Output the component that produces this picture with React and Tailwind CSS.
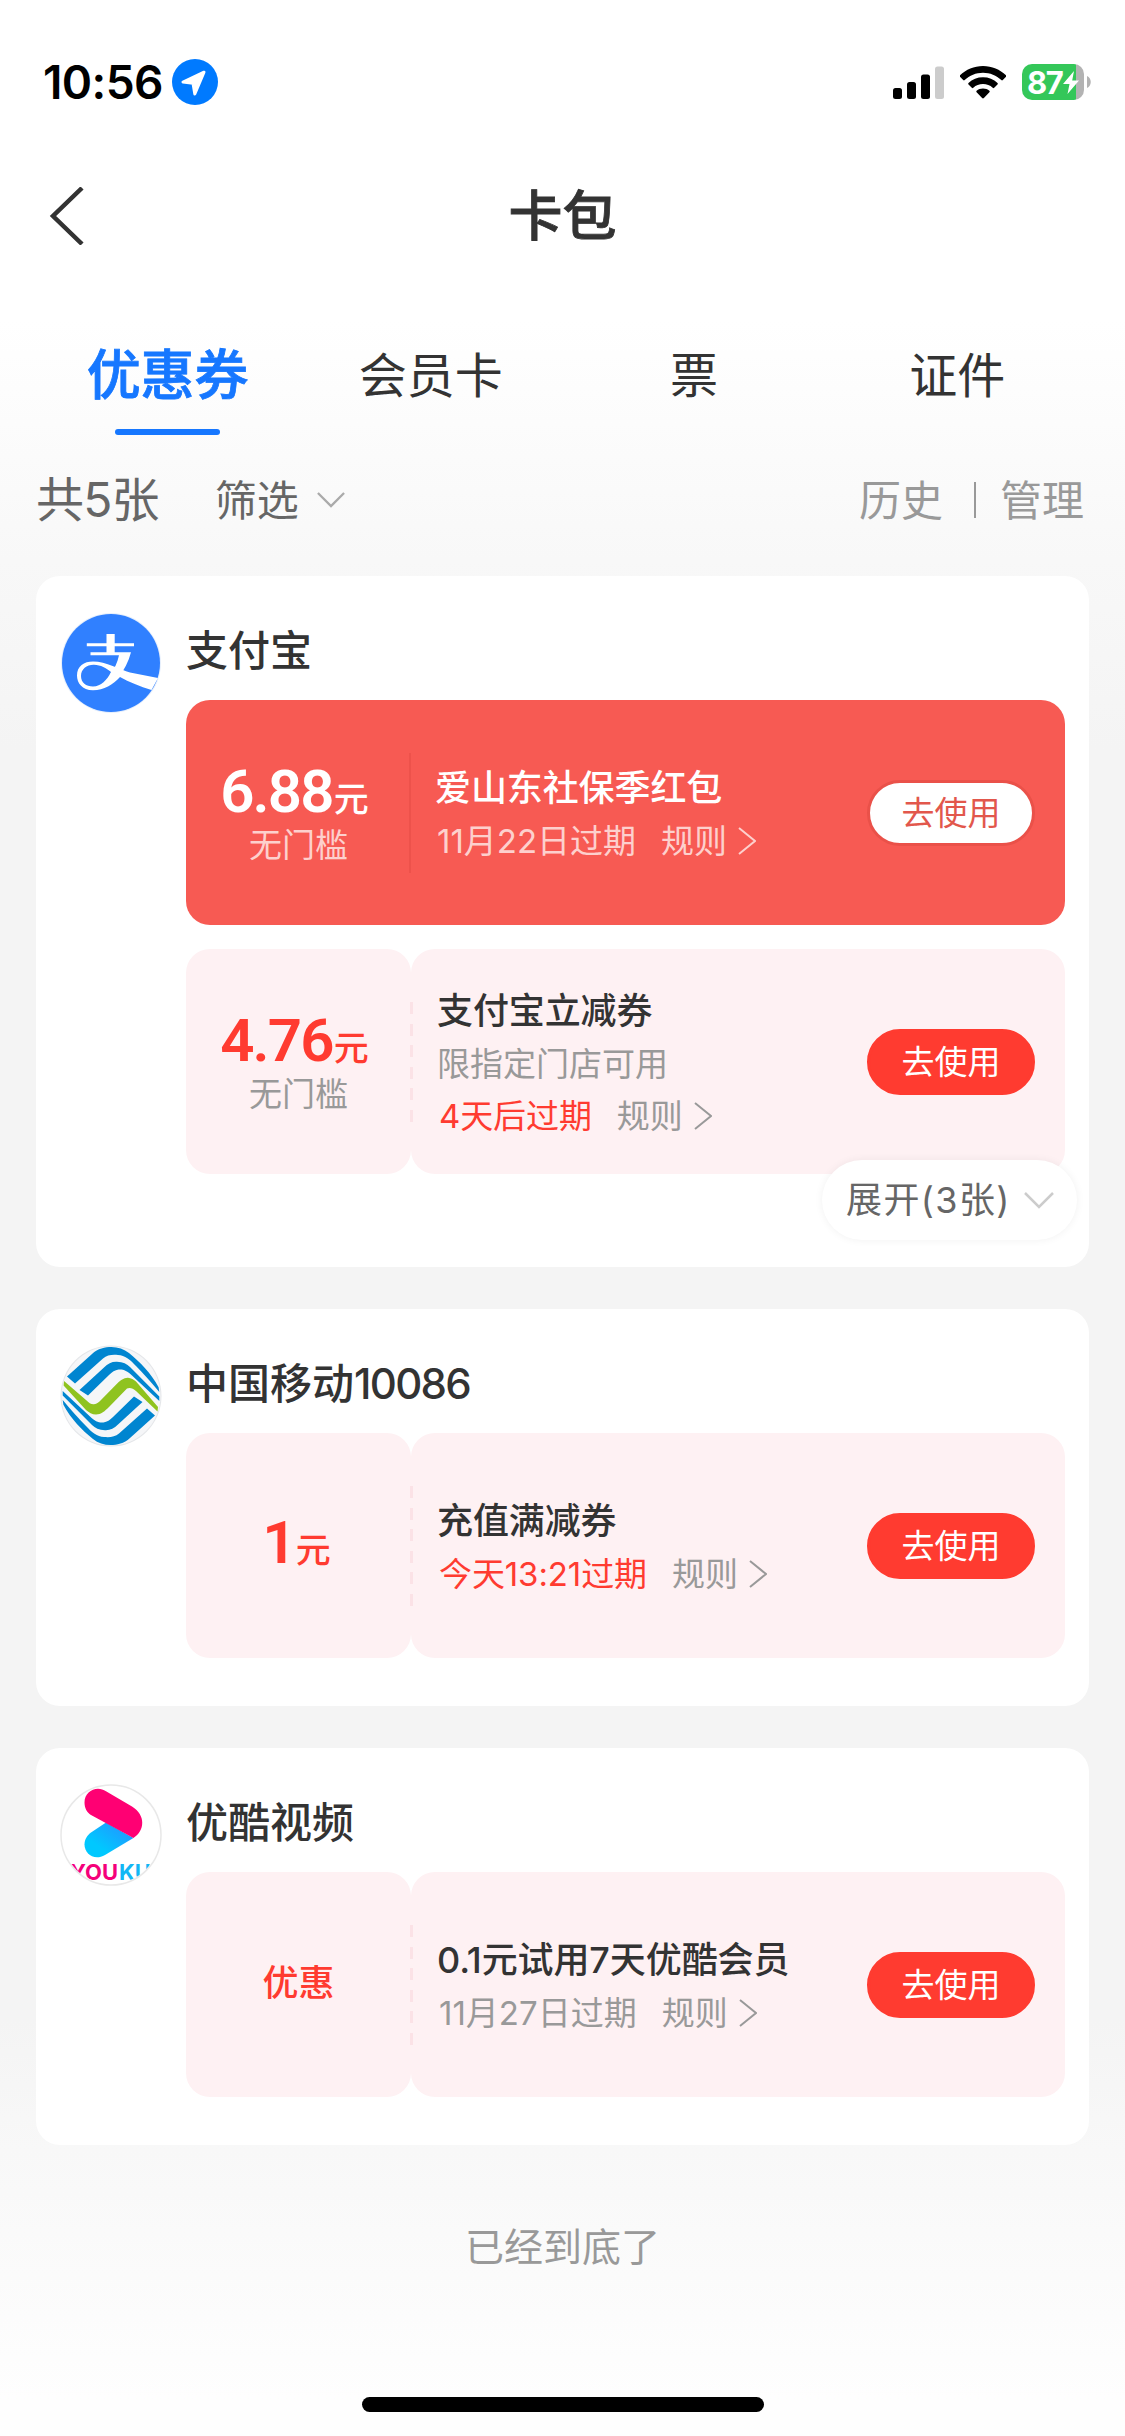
// src/App.jsx
const groups = [
  {
    name: "支付宝",
    Logo: AlipayLogo,
    more: "展开(3张)",
    coupons: [
      { amount: "6.88", note: "无门槛", title: "爱山东社保季红包", expire: "11月22日过期", featured: true },
      { amount: "4.76", note: "无门槛", title: "支付宝立减券", limit: "限指定门店可用", expire: "4天后过期", urgent: true },
    ],
  },
  {
    name: "中国移动",
    hotline: "10086",
    Logo: MobileLogo,
    coupons: [{ amount: "1", title: "充值满减券", expire: "今天13:21过期", urgent: true }],
  },
  {
    name: "优酷视频",
    Logo: YoukuLogo,
    coupons: [{ label: "优惠", title: "0.1元试用7天优酷会员", expire: "11月27日过期" }],
  },
];

const tabs = ["优惠券", "会员卡", "票", "证件"];

function AlipayLogo() {
  return (
    <svg viewBox="0 0 102 102" className="size-[102px]">
      <circle cx="51" cy="51" r="50" fill="#e6effc" />
      <circle cx="51" cy="51" r="49" fill="#3080ff" />
      <g fill="#fff">
        <path d="M46.500 22h8.200v9.200H74v3H54.700v6H71c-2.500 9.500-7 18-12.500 25.300L50 62.500c4.500-5.500 7.500-12 9-19.200H30.500v-3h16v-6H26.800v-3H46.500z" />
        <path
          fillRule="evenodd"
          d="M33 49.500C46 49.500 60 57.500 70 60.500L98 66 91.500 78C80 74.500 69 70 60 65 53 72.500 44 78.300 33 78.300 22 78 17 71 17 63.500 17 54 24 49.500 33 49.500ZM21 64C21 70.500 26 74.500 33 74.500 41 74.500 47 68 51 60 46 56 41 53 34 52.800 27 52.600 21 57 21 64Z"
        />
      </g>
    </svg>
  );
}

function MobileLogo() {
  const blue = (
    <>
      <path d="M7 31.500 32 9C38 3.500 45 2 51.400 2 58 2 64 4 69 8 80 17 91 28 98.600 42.300L99.300 47C90 36 83 28 76 21 70 14.500 65 10.500 58 10 52 9.500 47 10 43 13.500L15 38.500Z" />
      <path d="M19.500 45 44 22.500C48 18.500 52 16.500 57 16.800 63 17 67 19 70 22L99.300 51.500V56L72 30.500C67 25.500 63 24 58.500 24.500 55 25 52 27 49 30L28 50.500Z" />
    </>
  );
  return (
    <svg viewBox="0 0 102 102" className="size-[102px]">
      <circle cx="51" cy="51" r="50.500" fill="#e4e6e9" />
      <circle cx="51" cy="51" r="49.500" fill="#f5f6f8" />
      <g fill="#0085d0">
        {blue}
        <g transform="rotate(180 51 51)">{blue}</g>
      </g>
      <path
        fill="#8fc31f"
        d="M4 36 26 55C29 58 31 59.500 34 59.300 37 59 39 57 41 55L55.700 40C60 35.500 64 32.500 68 32.700 71 33 74 34.500 76 36.500L98 62 97.500 66.500 76 46C73 43.500 70 42 67 43.500L49 62C45 66 41 69.500 36 69.500 32 69.500 29 67.500 26 65L3.600 40.500Z"
      />
    </svg>
  );
}

function YoukuLogo() {
  return (
    <svg viewBox="0 0 102 102" className="size-[102px]">
      <defs>
        <clipPath id="youku-clip">
          <circle cx="51" cy="51" r="49" />
        </clipPath>
        <linearGradient id="youku-blue" x1="0" y1="1" x2="1" y2="0">
          <stop offset="0.3" stopColor="#00c8ff" />
          <stop offset="1" stopColor="#2a8cff" />
        </linearGradient>
      </defs>
      <circle cx="51" cy="51" r="50" fill="#fff" stroke="#e8e8e8" strokeWidth="1.5" />
      <path fill="url(#youku-blue)" d="M46 38.500 73.400 54 45 71C34 77.500 24.500 69.500 24.500 60.500 24.500 55 27.500 51 31 48.500Z" />
      <path fill="#ff0073" d="M31 31C27 28.500 24.500 24 24.500 18.500 24.500 10 31 4.700 38 4.700 41 4.700 43.500 5.700 46 7.200L72 22.500C86 31 85 47 73.400 54Z" />
      <g clipPath="url(#youku-clip)" fontSize="22" fontWeight="700" fontFamily="Inter, sans-serif">
        <text x="10" y="96" fill="#f5007a" textLength="48" lengthAdjust="spacingAndGlyphs">YOU</text>
        <text x="59" y="96" fill="#12b7f5" textLength="32" lengthAdjust="spacingAndGlyphs">KU</text>
      </g>
    </svg>
  );
}

function StatusBar() {
  return (
    <div className="flex h-[164px] items-center justify-between pl-[43px] pr-[34px]">
      <div className="flex items-center gap-[7px]">
        <span className="w-[122px] text-[46px] leading-none font-semibold tracking-[-0.6px] text-black">10:56</span>
        <svg viewBox="0 0 46 46" className="size-[46px]">
          <circle cx="23" cy="23" r="23" fill="#007aff" />
          <path
            d="M32 13.200 11 23 21 24.300 22.800 35Z"
            fill="#fff"
            stroke="#fff"
            strokeWidth="3"
            strokeLinejoin="round"
          />
        </svg>
      </div>
      <div className="flex items-center">
        <svg viewBox="0 0 51 33" className="h-[33px] w-[51px]">
          <rect x="0" y="22" width="9" height="11" rx="2.500" />
          <rect x="14" y="16" width="9" height="17" rx="2.500" />
          <rect x="28" y="8.500" width="9" height="24.500" rx="2.500" />
          <rect x="42" y="0.500" width="9" height="32.500" rx="2.500" fill="#ccc" />
        </svg>
        <svg viewBox="0 0 46 33" className="ml-4 h-[33px] w-[46px]">
          <path d="M23 0C14 0 6 3.500 0 9.300c-.5.500-.5 1 0 1.500l3.200 3.300c.5.500 1 .5 1.500 0C9.500 9.500 16 6.800 23 6.800s13.500 2.700 18.300 7.300c.5.500 1 .5 1.500 0l3.200-3.300c.5-.5.5-1 0-1.500C40 3.500 32 0 23 0Z" />
          <path d="M23 11.300c-5.600 0-10.700 2-14.500 5.600-.5.500-.5 1 0 1.500l3.300 3.400c.5.500 1 .5 1.500 0 2.600-2.400 6-3.700 9.700-3.700s7.100 1.300 9.700 3.700c.5.500 1 .5 1.500 0l3.300-3.400c.5-.5.5-1 0-1.500-3.800-3.600-8.900-5.600-14.500-5.600Z" />
          <path d="M23 22.500c-2.500 0-4.700.9-6.400 2.300-.5.500-.5 1 0 1.500l5.500 5.700c.6.600 1.200.6 1.800 0l5.500-5.700c.5-.5.500-1 0-1.500-1.700-1.400-3.900-2.300-6.400-2.300Z" />
        </svg>
        <div className="relative ml-4 flex h-9 w-[62px] items-center overflow-hidden rounded-[10px] bg-[linear-gradient(90deg,#34c759_54px,#b3b3b3_54px)] pl-[5px]">
          <span className="text-[31px] leading-none font-bold tracking-[-1.5px] text-white">87</span>
          <svg viewBox="0 0 16 23" className="absolute top-[7px] left-[41px] h-[23px] w-4">
            <path d="M11 0 0 13h6.500L4.500 23 16 9.500H9.200Z" fill="#fff" />
          </svg>
        </div>
        <svg viewBox="0 0 4 12" className="ml-[3px] h-3 w-1">
          <path d="M0 0c5 2 5 10 0 12Z" fill="#b3b3b3" />
        </svg>
      </div>
    </div>
  );
}

function ChevronDown({ className }) {
  return (
    <svg viewBox="0 0 30 17" fill="none" stroke="currentColor" strokeWidth="2.500" className={className}>
      <path d="M1 1 15 15 29 1" />
    </svg>
  );
}

function Coupon({ amount, label, note, title, limit, expire, urgent, featured }) {
  const panel = featured ? "" : "bg-[#fef1f3]";
  const muted = featured ? "text-[#fdd0cd]" : "text-[#999]";
  return (
    <div
      className={`relative flex h-[225px] w-[879px] ${
        featured ? "rounded-3xl bg-[#f75a53] text-white" : "text-[#333]"
      }`}
    >
      <div className={`flex w-[225px] flex-col items-center justify-center rounded-3xl ${panel} ${featured ? "" : "text-[#ff3b30]"}`}>
        {label ? (
          <span className="-mt-1 text-[36px] leading-[50px] font-medium">{label}</span>
        ) : (
          <div className={`flex items-baseline ${note ? "-ml-2 pt-[3px]" : "-ml-1 pb-1"}`}>
            <span className="font-[Roboto] text-[60px] leading-[60px] font-semibold tracking-[-1.8px]">{amount}</span>
            <span className="ml-px text-[35px] leading-[50px] font-medium">元</span>
          </div>
        )}
        {note && <span className={`text-[33px] leading-[42px] ${muted}`}>{note}</span>}
      </div>
      <div className={`flex flex-1 items-center justify-between rounded-3xl pr-[30px] ${featured ? "pl-6" : "pl-[26px]"} ${panel}`}>
        <div className="flex flex-col pt-[3px]">
          <span className="text-[36px] leading-[54px] font-medium tracking-[-0.1px]">{title}</span>
          {limit && <span className={`text-[33px] leading-[52px] ${muted}`}>{limit}</span>}
          <div className={`flex items-center pl-[2px] text-[33px] leading-[53px] ${muted}`}>
            <span className={urgent ? "tracking-[-0.1px] text-[#ff3b30]" : ""}>{expire}</span>
            <span className="ml-[25px]">规则</span>
            <svg viewBox="0 0 18 28" fill="none" stroke="currentColor" strokeWidth="2" className="ml-[11px] h-7 w-[18px]">
              <path d="M1 1 17 14 1 27" />
            </svg>
          </div>
        </div>
        <button
          className={`h-[66px] w-[168px] rounded-full border-[3px] pt-[2px] text-[33px] leading-none ${
            featured ? "border-[#ea5149] bg-white text-[#e2574c]" : "border-[#ff3b30] bg-[#ff3b30] text-white"
          }`}
        >
          去使用
        </button>
      </div>
      {/* perforation between amount and details */}
      {featured ? (
        <div className="absolute top-[53px] left-[223px] h-[120px] w-[2px] bg-[#ed524b]" />
      ) : (
        <>
          <div className="absolute top-6 left-[223px] h-[177px] w-1 bg-[#fef1f3]" />
          <div className="absolute top-[53px] left-[224px] h-[120px] w-[3px] bg-[repeating-linear-gradient(180deg,#fbe2e6_0_12px,transparent_12px_21.600px)]" />
        </>
      )}
    </div>
  );
}

function Group({ name, hotline, Logo, coupons, more }) {
  return (
    <section className={`relative flex rounded-3xl bg-white pt-9 pl-6 ${more ? "pb-[93px]" : "pb-12"}`}>
      <Logo />
      <div className="ml-6">
        <h2 className="mb-[11px] h-[77px] text-[42px] leading-[77px] font-medium text-[#333]">
          {name}
          {hotline && <span className="tracking-[-1.7px]">{hotline}</span>}
        </h2>
        <div className="flex flex-col gap-6">
          {coupons.map((c) => (
            <Coupon key={c.title} {...c} />
          ))}
        </div>
      </div>
      {more && (
        <button className="absolute right-[12px] bottom-[27px] flex h-20 w-[255px] items-center rounded-full bg-white pl-6 text-[36px] tracking-[1.4px] text-[#666] shadow-[0_0_8px_rgba(0,0,0,0.06)]">
          {more}
          <ChevronDown className="ml-[13px] h-[17px] w-[30px] text-[#ccc]" />
        </button>
      )}
    </section>
  );
}

export default function App() {
  return (
    <div className="h-[2436px] w-[1125px] overflow-hidden bg-[linear-gradient(180deg,#fff_320px,#f8f8f8_560px,#f4f4f4_750px,#f4f4f4_2020px,#f8f8f8_2150px,#fefefe_2400px)] font-['Inter','Noto_Sans_CJK_SC',sans-serif]">
      <StatusBar />

      {/* Title bar */}
      <header className="grid h-[103px] grid-cols-3 items-center px-[49px] text-[#333]">
        <svg viewBox="0 0 36 58" fill="none" stroke="currentColor" strokeWidth="4.500" className="h-[58px] w-9">
          <path d="M33 1 4 29 33 57" />
        </svg>
        <h1 className="pt-[3px] text-center text-[54px] leading-none font-medium [-webkit-text-stroke:0.8px_#333]">卡包</h1>
      </header>

      {/* Tabs */}
      <nav className="grid h-[168px] grid-cols-4 px-9 pt-[73px]">
        {tabs.map((tab, i) => (
          <div key={tab} className="flex flex-col items-center">
            <span
              className={`h-[72px] leading-[72px] ${
                i === 0
                  ? "text-[54px] font-medium text-[#1677ff] [-webkit-text-stroke:0.8px_#1677ff]"
                  : "text-[48px] text-[#333]"
              }`}
            >
              {tab}
            </span>
            {i === 0 && <span className="mt-[17px] h-[6px] w-[105px] rounded-full bg-[#1677ff]" />}
          </div>
        ))}
      </nav>

      {/* Filter row */}
      <div className="flex h-[129px] items-center pt-px pr-[41px] pl-9 text-[42px] text-[#666]">
        <span className="text-[48px] tracking-[-0.8px]">共5张</span>
        <span className="ml-[56px]">筛选</span>
        <ChevronDown className="ml-[18px] h-[16px] w-[28px] text-[#aaa]" />
        <div className="ml-auto flex items-center text-[#999]">
          <span>历史</span>
          <span className="mr-6 ml-[31px] h-9 w-[2px] bg-[#999]" />
          <span>管理</span>
        </div>
      </div>

      <main className="flex flex-col gap-[42px] px-9 pt-3">
        {groups.map((g) => (
          <Group key={g.name} {...g} />
        ))}
      </main>

      <footer className="flex flex-col items-center">
        <p className="h-[204px] text-[39px] leading-[204px] text-[#999]">已经到底了</p>
        <div className="mt-12 h-[15px] w-[402px] rounded-full bg-black" />
      </footer>
    </div>
  );
}
